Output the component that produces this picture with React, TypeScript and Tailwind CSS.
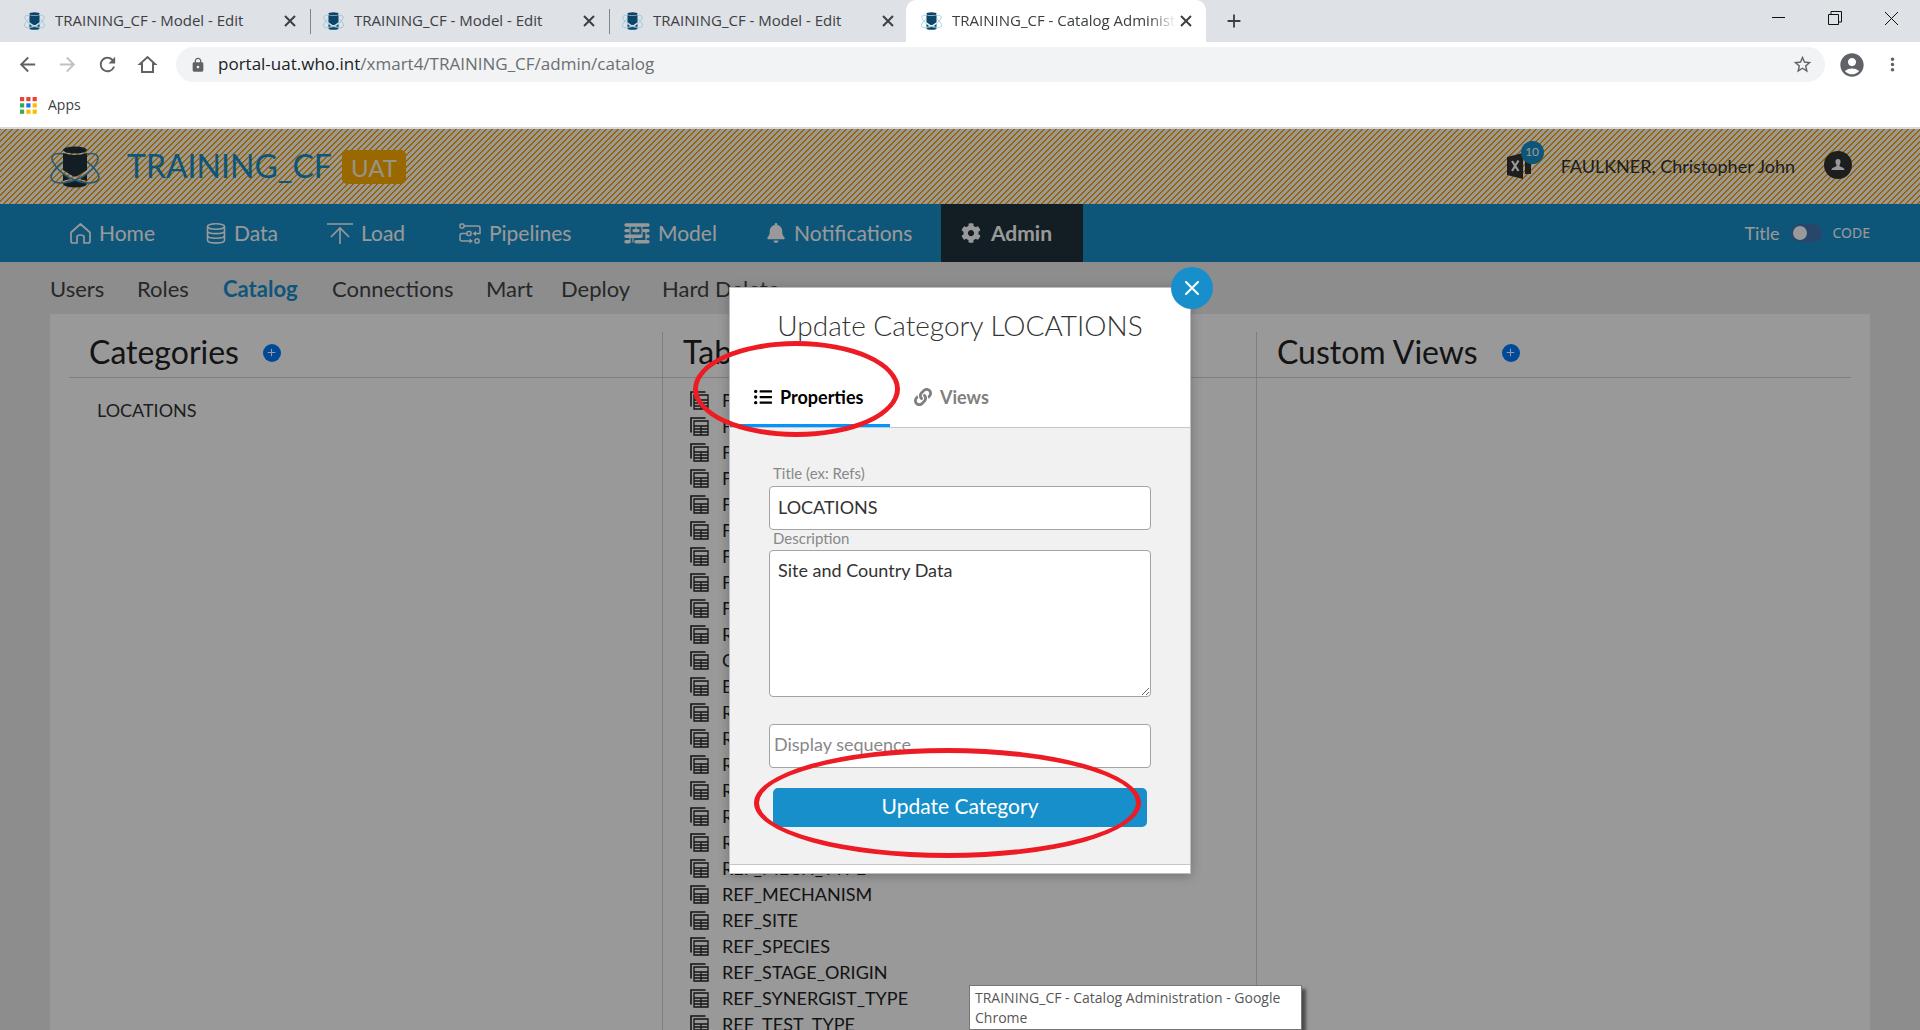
import React from "react";
import { FaBell, FaCog, FaLink, FaListUl } from "react-icons/fa";
import {
  MdAccountCircle,
  MdArrowBack,
  MdArrowForward,
  MdLock,
  MdMoreVert,
  MdRefresh,
  MdStarBorder,
  MdAdd,
} from "react-icons/md";

function Logo({ className, cup, orbit }: { className: string; cup: string; orbit: string }) {
  return (
    <svg viewBox="0 0 50 42" className={className} preserveAspectRatio="none" aria-hidden="true">
      <ellipse cx="25" cy="38" rx="12" ry="3.5" fill={cup} />
      <path d="M13 28 L20 33 L13 35Z M37 28 L30 33 L37 35Z" fill={cup} />
      <path d="M13 7 Q25 11 37 7 V24 L29 29 Q25 32 21 29 L13 24Z" fill={cup} />
      <ellipse cx="25" cy="4" rx="12" ry="3.5" fill={cup} />
      <g fill="none" stroke={orbit} strokeWidth="1.6">
        <path d="M13 8 C4 6 0 10 3 16 C8 26 22 36 38 37 C49 37 51 32 47 26 C44 22 41 18 37 16" />
        <path d="M37 8 C46 6 50 10 47 16 C42 26 28 36 12 37 C1 37 -1 32 3 26 C6 22 9 18 13 16" />
      </g>
    </svg>
  );
}

function CloseGlyph() {
  return (
    <svg viewBox="0 0 12 12" className="h-3 w-3" stroke="currentColor" strokeWidth="2">
      <path d="M1 1 L11 11 M11 1 L1 11" />
    </svg>
  );
}

function BrowserHomeIcon() {
  return (
    <svg viewBox="0 0 23 23" className="h-[23px] w-[23px]" fill="none" stroke="currentColor" strokeWidth="2">
      <path d="M4 11 L11.500 4 L19 11 H17 V19 H6 V11Z" />
    </svg>
  );
}

function HomeIcon() {
  return (
    <svg viewBox="0 0 21 21" className="h-[21px] w-[21px]" fill="none" stroke="currentColor" strokeWidth="1.7" strokeLinejoin="round">
      <path d="M1 9.5 L10.500 1 L20 9.500 V18 Q20 20 18 20 H14 V14 Q14 12 10.500 12 Q7 12 7 14 V20 H3 Q1 20 1 18Z" />
    </svg>
  );
}

function DataIcon() {
  return (
    <svg viewBox="0 0 20 21" className="h-[21px] w-5" fill="none" stroke="currentColor" strokeWidth="1.6">
      <ellipse cx="10" cy="3.500" rx="8.500" ry="2.700" />
      <path d="M1.500 3.500 V17.300 C1.500 21 18.500 21 18.500 17.300 V3.500 M1.500 8 C1.500 11.500 18.500 11.500 18.500 8 M1.500 12.600 C1.500 16.200 18.500 16.200 18.500 12.600" />
    </svg>
  );
}

function LoadIcon() {
  return (
    <svg viewBox="0 0 26 21" className="h-[21px] w-[26px]" fill="none" stroke="currentColor" strokeWidth="1.6">
      <path d="M0 1 H26 M13 21 V5 M4 14 L13 5 L22 14" />
    </svg>
  );
}

function PipelinesIcon() {
  return (
    <svg viewBox="0 0 22 21" className="h-[21px] w-[22px]" fill="none" stroke="currentColor" strokeWidth="1.5">
      <rect x="1" y="1" width="4" height="4" rx="1.200" />
      <rect x="8" y="8.500" width="4" height="4" rx="1.200" />
      <rect x="16" y="16" width="4" height="4" rx="1.200" />
      <path d="M5 3 H19 Q21 3 21 5 V10.500 H15 M8 10.500 H3 Q1 10.500 1 12.500 V16 Q1 18 3 18 H12" />
      <path d="M17 8 V13 L13.500 10.500Z M10.500 15.500 V20.500 L14 18Z" fill="currentColor" stroke="none" />
    </svg>
  );
}

function ModelIcon() {
  return (
    <svg viewBox="0 0 26 21" className="h-[21px] w-[26px]" fill="none" stroke="currentColor" strokeLinecap="round">
      <path strokeWidth="3.400" d="M2 2 H24 M2 7.600 H4 M10 7.600 H14 M20 7.600 H24 M2 13.200 H17 M23 13.200 H24 M2 18.800 H5 M12 18.800 H24" />
      <path strokeWidth="1.200" d="M6 2 V19 M12 2 V8 M18 2 V13 M22 8 V19 M9 13 V19" />
    </svg>
  );
}

function TableIcon() {
  return (
    <svg viewBox="0 0 19 19" className="h-[19px] w-[19px] shrink-0" fill="none" stroke="currentColor" aria-hidden="true">
      <path strokeWidth="1.600" d="M1 15.500 V1 H15.500" />
      <path strokeWidth="1.300" d="M4 4 H18 V18 H4Z M4 9 H18 M4 12 H18 M4 15 H18 M11 9 V18" />
    </svg>
  );
}

function ExcelIcon() {
  return (
    <svg viewBox="0 0 24 26" className="h-[26px] w-6" aria-hidden="true">
      <path d="M0 4 L16 0 V26 L0 22Z" fill="#333" />
      <path d="M18 4 H24 V21 H18Z" fill="#333" />
      <path d="M5 8 L11.500 18 M11.500 7.500 L5 18" stroke="#fff" strokeWidth="2.200" />
    </svg>
  );
}

function UserIcon() {
  return (
    <svg viewBox="0 0 28 28" className="h-7 w-7">
      <circle cx="14" cy="14" r="14" fill="#333" />
      <path d="M14 8 C16 8 16.800 9.500 16.500 11.200 C16.300 12.600 15.500 13.300 15.500 14.500 C15.500 16.500 20.500 15.800 20.500 19 H7.500 C7.500 15.800 12.500 16.500 12.500 14.500 C12.500 13.300 11.700 12.600 11.500 11.200 C11.200 9.500 12 8 14 8Z" fill="#fff" />
    </svg>
  );
}

function AppsIcon() {
  const colors = ["#ea4335", "#ea4335", "#ea4335", "#34a853", "#1a73e8", "#fbbc04", "#34a853", "#fbbc04", "#fbbc04"];
  return (
    <svg viewBox="0 0 17 17" className="h-[17px] w-[17px]" aria-hidden="true">
      {colors.map((c, i) => (
        <rect key={i} x={(i % 3) * 6.3} y={Math.floor(i / 3) * 6.3} width="4.200" height="4.200" fill={c} />
      ))}
    </svg>
  );
}

function TabStrip() {
  const tabs = [
    { title: "TRAINING_CF - Model - Edit" },
    { title: "TRAINING_CF - Model - Edit" },
    { title: "TRAINING_CF - Model - Edit", last: true },
  ];
  return (
    <div className="flex h-[42px] items-center bg-[#dee1e6] pl-3">
      {tabs.map((t, i) => (
        <div key={i} className="flex h-full w-[299px] items-center pl-3">
          <Logo className="mr-2.5 h-[18px] w-[21px] shrink-0" cup="#0b4568" orbit="#7dbfe0" />
          <span className="flex-1 truncate">{t.title}</span>
          <button aria-label="Close tab" className="mr-3.5 text-[#3c4043]"><CloseGlyph /></button>
          <span className={t.last ? "w-px" : "h-[25px] w-px bg-[#80868b]"} />
        </div>
      ))}
      <div className="-ml-[3px] flex h-full w-[300px] items-center rounded-t-[10px] bg-white pl-[15px]">
        <Logo className="mr-2.5 h-[18px] w-[21px] shrink-0" cup="#0b4568" orbit="#7dbfe0" />
        <span className="flex-1 overflow-hidden whitespace-nowrap [mask-image:linear-gradient(to_right,black_88%,transparent)]">
          TRAINING_CF - Catalog Administration
        </span>
        <button aria-label="Close tab" className="mr-3.5 ml-1 text-[#3c4043]"><CloseGlyph /></button>
      </div>
      <button aria-label="New tab" className="ml-[17px] text-[#3c4043]"><MdAdd size={22} /></button>
      <div className="mb-1.5 ml-auto flex items-center gap-[43px] pr-[22px] text-[#111]">
        <button aria-label="Minimize">
          <svg viewBox="0 0 13 13" className="h-[13px] w-[13px]" stroke="currentColor"><path d="M0 5.500 H13" /></svg>
        </button>
        <button aria-label="Restore">
          <svg viewBox="0 0 14 14" className="h-3.5 w-3.5" fill="none" stroke="currentColor"><path d="M.5 3.500 H10.500 V13.500 H.5Z M3 3.500 V.5 H13.500 V11 H10.500" /></svg>
        </button>
        <button aria-label="Close window">
          <svg viewBox="0 0 13 13" className="h-[13px] w-[13px]" stroke="currentColor"><path d="M0 0 L13 13 M13 0 L0 13" /></svg>
        </button>
      </div>
    </div>
  );
}

function Toolbar() {
  return (
    <div className="flex h-[45px] items-center gap-[17px] bg-white pl-4 text-[#5f6368]">
      <button aria-label="Back"><MdArrowBack size={23} /></button>
      <button aria-label="Forward" className="text-[#c0c2c4]"><MdArrowForward size={23} /></button>
      <button aria-label="Reload"><MdRefresh size={23} /></button>
      <button aria-label="Home"><BrowserHomeIcon /></button>
      <div className="flex h-[35px] flex-1 items-center rounded-full bg-[#f1f3f4] px-3">
        <MdLock size={16} className="mr-3 ml-0.5 text-[#5f6368]" />
        <a href="#url" className="flex-1 text-[17px] text-[#6b6f73]">
          <span className="text-[#202124]">portal-uat.who.int</span>/xmart4/TRAINING_CF/admin/catalog
        </a>
        <button aria-label="Bookmark"><MdStarBorder size={21} /></button>
      </div>
      <div className="-ml-1 flex items-center gap-4 pr-[17px]">
        <button aria-label="Profile"><MdAccountCircle size={28} /></button>
        <button aria-label="Menu"><MdMoreVert size={21} /></button>
      </div>
    </div>
  );
}

function Header() {
  return (
    <header className="flex h-[75px] items-center bg-[linear-gradient(135deg,#ffa900_10%,#fff_10%,#fff_50%,#ffa900_50%,#ffa900_60%,#fff_60%)] bg-[length:6px_6px] px-[50px]">
      <Logo className="mr-[27px] h-[42px] w-[50px]" cup="#20323c" orbit="#4095bb" />
      <a href="#home" className="pb-0.5 text-[32px] text-[#178fca]">TRAINING_CF</a>
      <span className="ml-2.5 flex h-[34px] w-16 items-center justify-center rounded-[5px] bg-[#ffae00] pt-0.5 text-2xl text-[#fff6df]">UAT</span>
      <div className="ml-auto flex items-center pb-0.5 text-[#333]">
        <button aria-label="Excel exports" className="relative mr-[30px] block">
          <ExcelIcon />
          <span className="absolute -top-3 left-3.5 flex h-[23px] w-[23px] items-center justify-center rounded-full bg-[#178fca] text-xs text-white">10</span>
        </button>
        <span className="text-lg">FAULKNER, Christopher John</span>
        <button aria-label="Account" className="mr-[18px] ml-[29px] pb-0.5"><UserIcon /></button>
      </div>
    </header>
  );
}

function MainNav() {
  const items = [
    { label: "Home", icon: <HomeIcon />, width: "w-[136px]" },
    { label: "Data", icon: <DataIcon />, width: "w-[121px]" },
    { label: "Load", icon: <LoadIcon />, width: "w-[132px]" },
    { label: "Pipelines", icon: <PipelinesIcon />, width: "w-[165px]" },
    { label: "Model", icon: <ModelIcon />, width: "w-[142px]" },
    { label: "Notifications", icon: <FaBell size={20} />, width: "w-[195px]" },
  ];
  return (
    <nav className="flex h-[58px] bg-[#178fca] pr-[50px] pl-[50px] text-[21px] text-white">
      {items.map((it) => (
        <a key={it.label} href="#nav" className={"flex items-center gap-2 pl-5 " + it.width}>
          {it.icon}
          {it.label}
        </a>
      ))}
      <a href="#admin" className="flex w-[142px] items-center gap-2.5 bg-[#20323c] pl-5 font-bold">
        <FaCog size={20} />
        Admin
      </a>
      <label className="ml-auto flex items-center text-lg">
        Title
        <input type="checkbox" className="mr-2.5 ml-3 h-[18px] w-[31px] appearance-none rounded-full bg-[#4376af] p-0.5 before:block before:h-3.5 before:w-3.5 before:rounded-full before:bg-white" />
        <span className="font-['Noto_Sans',sans-serif] text-sm">CODE</span>
      </label>
    </nav>
  );
}

function SubNav() {
  const items = [
    { label: "Users", style: "w-[87px]" },
    { label: "Roles", style: "w-[86px]" },
    { label: "Catalog", style: "w-[109px] font-bold text-[#178fca]" },
    { label: "Connections", style: "w-[154px]" },
    { label: "Mart", style: "w-[75px]" },
    { label: "Deploy", style: "w-[101px]" },
    { label: "Hard Delete", style: "" },
  ];
  return (
    <nav className="flex h-[52px] items-center pl-[50px] text-[22px] text-[#444]">
      {items.map((it) => (
        <a key={it.label} href="#sub" className={it.style}>{it.label}</a>
      ))}
    </nav>
  );
}

function ColumnHeading({ title, add }: { title: string; add?: boolean }) {
  return (
    <div className="flex h-[46px] items-center border-b border-[#d2d2d2] pb-1.5 pl-5">
      <h2 className="text-[32px] text-[#222]">{title}</h2>
      {add && (
        <button aria-label={"Add to " + title} className="mt-0.5 ml-6 flex h-[18px] w-[18px] items-center justify-center rounded-full bg-[#007bff] text-white">
          <MdAdd size={13} />
        </button>
      )}
    </div>
  );
}

const tables = [
  "F", "F", "F", "F", "F", "F", "F", "F", "F", "R", "C", "E", "R", "R", "R", "R", "R", "R",
  "REF_MECH_TYPE",
  "REF_MECHANISM",
  "REF_SITE",
  "REF_SPECIES",
  "REF_STAGE_ORIGIN",
  "REF_SYNERGIST_TYPE",
  "REF_TEST_TYPE",
];

function Catalog() {
  return (
    <main className="mx-[50px] grid min-h-0 flex-1 grid-cols-3 overflow-hidden bg-white px-[19px] pt-[18px]">
      <section>
        <ColumnHeading title="Categories" add />
        <p className="mt-[18px] pl-7 text-lg text-[#333]">LOCATIONS</p>
      </section>
      <section className="-ml-px border-l border-[#d2d2d2]">
        <ColumnHeading title="Tables" add />
        <ul className="mt-[9px] pl-[27px] text-lg text-[#222]">
          {tables.map((t, i) => (
            <li key={i} className="flex h-[26px] items-center gap-[13px]">
              <TableIcon />
              {t}
            </li>
          ))}
        </ul>
      </section>
      <section className="-ml-px border-l border-[#d2d2d2]">
        <ColumnHeading title="Custom Views" add />
      </section>
    </main>
  );
}

function Ring({ className }: { className: string }) {
  return <span className={"pointer-events-none absolute rounded-[50%] border-[5px] border-[#ed1c24] " + className} />;
}

function Modal() {
  const field = "block w-full rounded-[4px] border border-[#a3a3a3] bg-white text-lg text-[#333]";
  return (
    <div role="dialog" aria-label="Update Category" className="relative w-[462px] border border-[#bdbdbd] bg-white shadow-[0_2px_10px_rgba(0,0,0,0.25)]">
      <button aria-label="Close" className="absolute -top-[21px] -right-[23px] flex h-[42px] w-[42px] items-center justify-center rounded-full bg-[#178fca] text-white">
        <svg viewBox="0 0 14 14" className="h-3.5 w-3.5" stroke="currentColor" strokeWidth="2" strokeLinecap="round"><path d="M1 1 L13 13 M13 1 L1 13" /></svg>
      </button>
      <h1 className="mb-1 flex h-[76px] items-center justify-center pb-0.5 text-[28px] font-light text-[#333]">Update Category LOCATIONS</h1>
      <div className="flex h-[59px] text-lg font-bold">
        <button className="flex w-[160px] items-center gap-2 border-b-[3px] border-[#0095ff] pt-0.5 pl-6 text-black">
          <FaListUl size={18} />
          Properties
        </button>
        <button className="flex items-center gap-2 border-b-[3px] border-transparent pt-0.5 pl-6 text-[#808080]">
          <FaLink size={18} />
          Views
        </button>
      </div>
      <form className="border-y border-[#c6c6c6] bg-[#f1f1f1] px-[39px] pt-[34px] pb-[37px]">
        <label htmlFor="title" className="block h-6 pl-1 text-[15px] leading-[22px] text-[#888]">Title (ex: Refs)</label>
        <input id="title" defaultValue="LOCATIONS" className={field + " h-11 px-2 pb-0.5"} />
        <label htmlFor="description" className="block h-5 pl-1 text-[15px] leading-4 text-[#888]">Description</label>
        <textarea id="description" defaultValue="Site and Country Data" className={field + " h-[147px] px-2 py-[5px]"} />
        <input aria-label="Display sequence" placeholder="Display sequence" className={field + " mt-[27px] h-11 px-1 pb-1 placeholder:text-[#888]"} />
        <div className="mt-5 px-1">
          <button type="button" className="h-[39px] w-full rounded-[5px] bg-[#178fca] pb-1 text-[21px] text-white">Update Category</button>
        </div>
      </form>
      <div className="h-2" />
      <Ring className="top-[53px] -left-[37px] h-24 w-[207px]" />
      <Ring className="top-[460px] left-6 h-[110px] w-[387px]" />
    </div>
  );
}

export default function App() {
  return (
    <div className="flex h-screen flex-col overflow-hidden bg-white font-['Lato',sans-serif]">
      <div className="font-['Open_Sans',sans-serif] text-sm text-[#3c4043]">
        <div className="text-[15px]">
          <TabStrip />
        </div>
        <Toolbar />
        <div className="flex h-[42px] items-center border-b-2 border-[#d5d7da] bg-white pb-1 pl-5">
          <a href="#apps" className="flex items-center gap-[11px]">
            <AppsIcon />
            Apps
          </a>
        </div>
      </div>
      <div className="relative flex min-h-0 flex-1 flex-col bg-[#ebebeb]">
        <Header />
        <MainNav />
        <SubNav />
        <Catalog />
        <div className="absolute inset-0 flex items-start justify-center bg-black/40 pt-[158px]">
          <Modal />
        </div>
        <div role="tooltip" className="absolute bottom-0 left-[969px] w-[333px] border border-[#767676] bg-white px-[5px] pt-0.5 pb-px font-['Open_Sans',sans-serif] text-sm text-[#575757] shadow-[4px_4px_3px_rgba(0,0,0,0.5)]">
          TRAINING_CF - Catalog Administration - Google Chrome
        </div>
      </div>
    </div>
  );
}
